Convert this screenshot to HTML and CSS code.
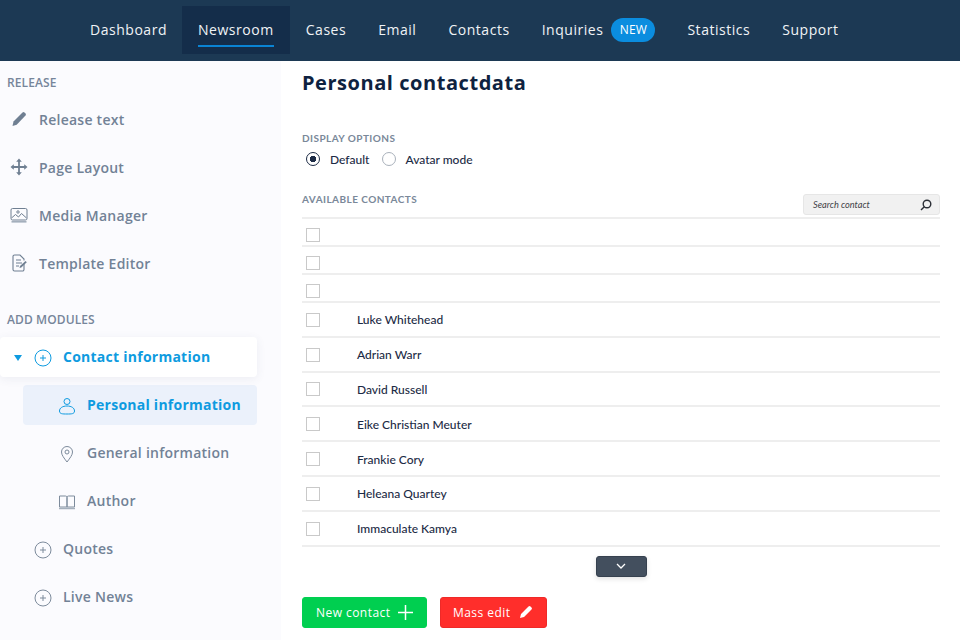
FILE: index.html
```html
<!DOCTYPE html>
<html lang="en">
<head>
<meta charset="utf-8">
<title>Personal contactdata</title>
<link rel="stylesheet" href="styles.css">
</head>
<body>
<header class="topbar">
  <nav class="nav">
    <a class="nav-item">Dashboard</a>
    <a class="nav-item active">Newsroom</a>
    <a class="nav-item">Cases</a>
    <a class="nav-item">Email</a>
    <a class="nav-item">Contacts</a>
    <a class="nav-item has-badge">Inquiries<span class="badge">NEW</span></a>
    <a class="nav-item">Statistics</a>
    <a class="nav-item">Support</a>
  </nav>
</header>
<div class="page">
  <aside class="sidebar">
    <h4 class="side-heading first">RELEASE</h4>
    <a class="side-item">
      <span class="side-icon"><svg width="18" height="18" viewBox="0 0 18 18"><path d="M2.500 16l1-4.600L12.500 2.500a1.500 1.500 0 0 1 2 0l1 1a1.500 1.500 0 0 1 0 2L6.700 14.800z" fill="#6f7f92"/></svg></span>Release text</a>
    <a class="side-item">
      <span class="side-icon"><svg width="18" height="18" viewBox="0 0 18 18"><path d="M9 .5l2.800 3.300H9.900v4.300h4.300V6.200L17.500 9l-3.300 2.800V9.900H9.900v4.300h1.900L9 17.500l-2.800-3.300h1.900V9.900H3.800v1.900L.5 9l3.300-2.800v1.900h4.300V3.800H6.200z" fill="#6f7f92"/></svg></span>Page Layout</a>
    <a class="side-item">
      <span class="side-icon"><svg width="18" height="18" viewBox="0 0 18 18" fill="none" stroke="#6f7f92" stroke-width="1"><rect x="1" y="2.500" width="16" height="11.500" rx="1.500"/><path d="M1.500 12l4-3.500 3 2.500 3-3.500 5 4.500"/><circle cx="8" cy="6" r="1.200"/><path d="M1.500 15.800h15" stroke-width="1.600" stroke="#a4afbc"/></svg></span>Media Manager</a>
    <a class="side-item">
      <span class="side-icon"><svg width="18" height="18" viewBox="0 0 18 18" fill="none" stroke="#6f7f92" stroke-width="1.100"><path d="M14 10v5.500a1.500 1.500 0 0 1-1.500 1.500h-8A1.500 1.500 0 0 1 3 15.500v-13A1.500 1.500 0 0 1 4.500 1H10l4 4v1.500"/><path d="M6 6h5M6 9h6M6 12h3"/><path d="M9.500 14l.5-2 5.500-5 1.300 1.300-5.500 5.200z" fill="#6f7f92" stroke="none"/></svg></span>Template Editor</a>

    <h4 class="side-heading second">ADD MODULES</h4>
    <a class="module open">
      <span class="caret"></span>
      <svg class="plus-icon" width="18" height="18" viewBox="0 0 18 18" fill="none" stroke="#0e9be0"><circle cx="9" cy="9" r="8"/><path d="M9 6v6M6 9h6"/></svg>
      Contact information</a>
    <a class="sub-item selected">
      <span class="sub-icon"><svg width="18" height="18" viewBox="0 0 18 18" fill="none" stroke="#0e9be0"><circle cx="9" cy="4.500" r="3"/><path d="M1.500 14c0-3 3-5 7.500-5s7.500 2 7.500 5-3 3-7.500 3-7.500 0-7.500-3z"/></svg></span>Personal information</a>
    <a class="sub-item">
      <span class="sub-icon"><svg width="18" height="18" viewBox="0 0 18 18" fill="none" stroke="#7d8b9c"><path d="M9 17c-3-4-5.500-7-5.500-10a5.500 5.500 0 0 1 11 0c0 3-2.500 6-5.500 10z"/><circle cx="9" cy="7" r="2"/></svg></span>General information</a>
    <a class="sub-item">
      <span class="sub-icon"><svg width="18" height="18" viewBox="0 0 18 18" fill="none" stroke="#7d8b9c"><path d="M1.500 3h6a1.500 1.500 0 0 1 1.500 1.500V14H1.500zM16.500 3h-6A1.500 1.500 0 0 0 9 4.500V14h7.500z"/><path d="M1 15.500h16" stroke-width="1.500" stroke="#a4afbc"/></svg></span>Author</a>
    <a class="module">
      <svg class="plus-icon" width="18" height="18" viewBox="0 0 18 18" fill="none" stroke="#7d8b9c"><circle cx="9" cy="9" r="8"/><path d="M9 6v6M6 9h6"/></svg>
      Quotes</a>
    <a class="module">
      <svg class="plus-icon" width="18" height="18" viewBox="0 0 18 18" fill="none" stroke="#7d8b9c"><circle cx="9" cy="9" r="8"/><path d="M9 6v6M6 9h6"/></svg>
      Live News</a>
  </aside>

  <main class="main">
    <h1 class="title">Personal contactdata</h1>
    <h5 class="label display-label">DISPLAY OPTIONS</h5>
    <div class="radios">
      <label class="radio"><span class="dot checked"></span>Default</label>
      <label class="radio"><span class="dot"></span>Avatar mode</label>
    </div>
    <div class="list-head">
      <h5 class="label">AVAILABLE CONTACTS</h5>
      <div class="search">
        <span class="search-text">Search contact</span>
        <svg width="12" height="12" viewBox="0 0 12 12" fill="none" stroke="#2b2f36" stroke-width="1.400"><circle cx="7" cy="5" r="3.800"/><path d="M4.300 7.700L1 11"/></svg>
      </div>
    </div>
    <div class="table">
      <div class="row short"><span class="check"></span></div>
      <div class="row short"><span class="check"></span></div>
      <div class="row short"><span class="check"></span></div>
      <div class="row"><span class="check"></span><span class="name">Luke Whitehead</span></div>
      <div class="row"><span class="check"></span><span class="name">Adrian Warr</span></div>
      <div class="row"><span class="check"></span><span class="name">David Russell</span></div>
      <div class="row"><span class="check"></span><span class="name">Eike Christian Meuter</span></div>
      <div class="row"><span class="check"></span><span class="name">Frankie Cory</span></div>
      <div class="row"><span class="check"></span><span class="name">Heleana Quartey</span></div>
      <div class="row"><span class="check"></span><span class="name">Immaculate Kamya</span></div>
    </div>
    <div class="more-wrap">
      <button class="more"><svg width="10" height="6" viewBox="0 0 10 6" fill="none" stroke="#fff" stroke-width="1.300"><path d="M1 1l4 4 4-4"/></svg></button>
    </div>
    <div class="actions">
      <button class="btn green">New contact<svg width="15" height="15" viewBox="0 0 15 15" stroke="#fff" stroke-width="1.500"><path d="M7.500 0v15M0 7.500h15"/></svg></button>
      <button class="btn red">Mass edit<svg width="14" height="14" viewBox="0 0 14 14"><path d="M1 13l1-4 7.500-7.500a1.400 1.400 0 0 1 2 0l1 1a1.400 1.400 0 0 1 0 2L5 12z" fill="#fff"/></svg></button>
    </div>
  </main>
</div>
</body>
</html>
```

FILE: styles.css
```css
* { box-sizing: border-box; }
html, body { margin: 0; padding: 0; }
body {
  width: 960px;
  height: 640px;
  overflow: hidden;
  background: #fff;
  font-family: "Open Sans", sans-serif;
}
h1, h4, h5 { margin: 0; }

.topbar {
  height: 61px;
  background: #1c3954;
  padding: 6px 0 0 74px;
}
.nav { display: flex; height: 48px; }
.nav-item {
  display: flex;
  align-items: center;
  height: 48px;
  padding: 0 16px 1px;
  color: #f0f3f6;
  font-size: 14px;
  font-weight: 500;
  letter-spacing: 0.53px;
  position: relative;
}
.nav-item:first-child { padding-right: 15px; }
.nav-item.active { background: #142d4a; }
.nav-item.active::after {
  content: "";
  position: absolute;
  left: 16px;
  right: 16px;
  top: 39px;
  height: 2px;
  background: #0a84d4;
}
.badge {
  display: inline-block;
  width: 44px;
  height: 24px;
  margin-left: 8px;
  border-radius: 12px;
  background: #0b8ddf;
  color: #fff;
  font-size: 12px;
  font-weight: 400;
  letter-spacing: 0.2px;
  line-height: 23px;
  text-align: center;
}

.page { display: flex; height: 579px; }

.sidebar {
  width: 281px;
  flex: none;
  background: #fbfbfe;
}
.side-heading {
  color: #76859a;
  font-size: 12px;
  font-weight: 600;
  line-height: 16px;
  padding-left: 7px;
  letter-spacing: 0.1px;
}
.side-heading.first { margin-top: 14px; margin-bottom: 8px; }
.side-heading.second { margin-top: 29px; margin-bottom: 9px; }
.side-item, .sub-item, .module {
  display: flex;
  align-items: center;
  height: 40px;
  margin-bottom: 8px;
  color: #728296;
  font-size: 14px;
  font-weight: 600;
  letter-spacing: 0.25px;
}
.sub-item, .module { padding-bottom: 1px; }
.side-icon { width: 39px; padding-left: 10px; display: flex; flex: none; }
.module { padding-left: 34px; width: 257px; border-radius: 4px; }
.plus-icon { margin: 2px 11px 0 0; flex: none; }
.module.open {
  position: relative;
  background: #fff;
  color: #0e9be0;
  font-weight: 700;
  box-shadow: 0 2px 10px rgba(60, 80, 120, 0.08);
}
.caret {
  position: absolute;
  left: 14px;
  top: 18px;
  border-left: 4px solid transparent;
  border-right: 4px solid transparent;
  border-top: 6px solid #0e9be0;
}
.sub-item {
  margin-left: 23px;
  width: 234px;
  border-radius: 4px;
}
.sub-icon { width: 64px; padding-left: 35px; margin-top: 2px; display: flex; flex: none; }
.sub-item.selected {
  background: #ebf1fb;
  color: #0e9be0;
  font-weight: 700;
}

.main { flex: 1; padding: 0 20px 0 21px; }
.title {
  color: #0e2240;
  font-size: 20px;
  font-weight: 700;
  line-height: 28px;
  margin-top: 8px;
  letter-spacing: 0.55px;
}
.label {
  color: #7a8899;
  font-family: Lato, sans-serif;
  font-size: 10px;
  font-weight: 700;
  letter-spacing: 0.45px;
  line-height: 14px;
}
.display-label { margin-top: 34px; }
.radios { display: flex; margin-top: 6px; padding-left: 4px; height: 16px; }
.radio {
  display: flex;
  align-items: center;
  color: #1c2b45;
  font-family: Lato, sans-serif;
  font-size: 12px;
  font-weight: 500;
  margin-right: 13px;
}
.dot {
  width: 14px;
  height: 14px;
  margin-right: 9px;
  border: 1px solid #a9b1bb;
  border-radius: 50%;
  flex: none;
}
.dot.checked {
  margin-right: 10px;
  border: 1.500px solid #1c2b45;
  background: radial-gradient(circle, #1c2b45 0 3px, #fff 3.500px);
}
.list-head {
  display: flex;
  justify-content: space-between;
  align-items: flex-start;
  height: 30px;
  margin-top: 20px;
  padding-top: 5px;
}
.search {
  display: flex;
  align-items: center;
  justify-content: space-between;
  width: 137px;
  height: 21px;
  margin-top: 2px;
  padding: 0 7px 0 9px;
  background: #f1f1f1;
  border: 1px solid #e6e6e6;
  border-radius: 3px;
}
.search-text {
  color: #3e4146;
  font-family: Lato, sans-serif;
  font-size: 9.200px;
  font-style: italic;
}
.table { border-top: 2px solid #eeeeee; }
.row {
  display: flex;
  align-items: center;
  height: 34.800px;
  padding-top: 1px;
  border-bottom: 2px solid #eeeeee;
}
.row.short { height: 28px; padding-top: 6px; }
.check {
  width: 14px;
  height: 14px;
  margin-left: 4px;
  margin-right: 37px;
  border: 1px solid #c9c9c9;
  flex: none;
}
.name {
  color: #1c2b45;
  font-family: Lato, sans-serif;
  font-size: 12px;
  font-weight: 500;
}
.more-wrap { display: flex; justify-content: center; margin-top: 9px; }
.more {
  display: flex;
  align-items: center;
  justify-content: center;
  width: 51px;
  height: 21px;
  padding: 0;
  background: #434f5e;
  border: 1px solid #36414f;
  border-radius: 3px;
  box-shadow: 0 2px 5px rgba(0, 0, 0, 0.12);
}
.actions { display: flex; gap: 13px; margin-top: 20px; }
.btn {
  display: flex;
  align-items: center;
  height: 31px;
  padding: 0;
  border-radius: 3px;
  color: #fff;
  font-family: "Open Sans", sans-serif;
  font-size: 12px;
  font-weight: 500;
  letter-spacing: 0.45px;
}
.btn.green {
  width: 125px;
  padding-left: 13px;
  gap: 8px;
  background: #00cf50;
  border: 1px solid #00cf50;
}
.btn.red {
  width: 107px;
  padding-left: 12px;
  gap: 9px;
  background: #ff2e2b;
  border: 1px solid #ee2a28;
}
```
